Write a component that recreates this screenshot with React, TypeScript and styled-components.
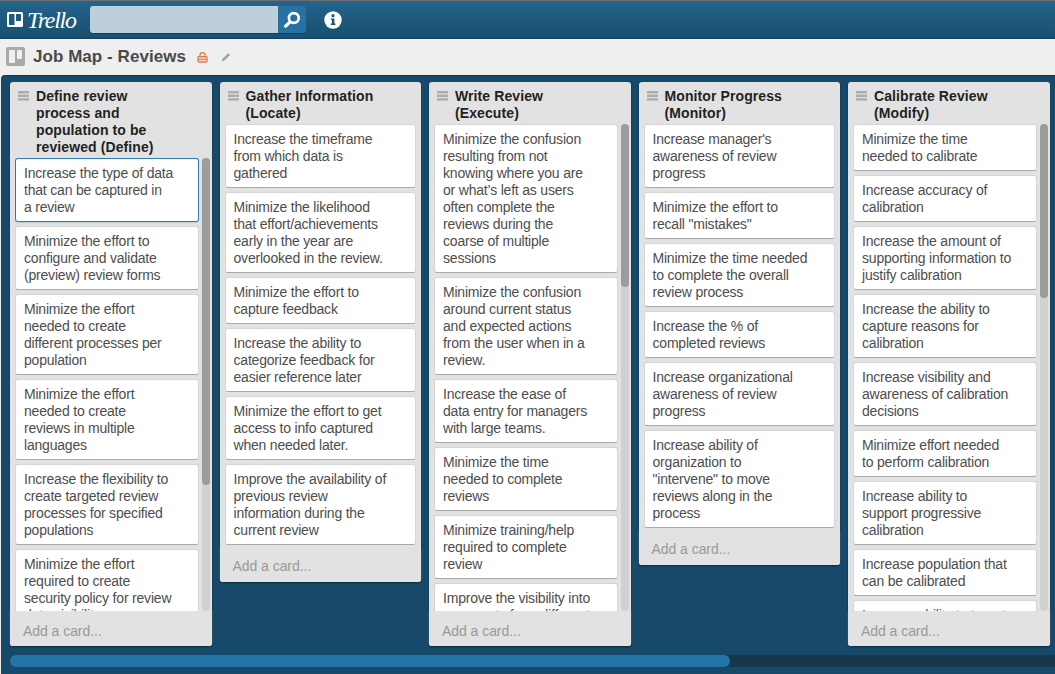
import React from "react";
import styled, { createGlobalStyle } from "styled-components";

const Global = createGlobalStyle`
  html, body { margin: 0; padding: 0; height: 100%; background: #efefef; overflow: hidden; }
  body { font-family: "Liberation Sans", Arial, sans-serif; }
  #root { height: 100%; }
`;

const Page = styled.div`
  width: 1055px;
  height: 674px;
  display: flex;
  flex-direction: column;
  overflow: hidden;
  background: #efefef;
`;

const Header = styled.header`
  height: 39px;
  flex: none;
  box-sizing: border-box;
  border-top: 1px solid #6a6f73;
  background: linear-gradient(#24648c, #18506f);
  border-bottom: 1px solid #15405c;
  display: flex;
  align-items: center;
  padding-left: 7px;
`;

const Logo = styled.div`
  display: flex;
  align-items: center;
  gap: 4px;
  width: 83px;
`;

const LogoWord = styled.span`
  font-family: "Liberation Serif", serif;
  font-style: italic;
  font-size: 24px;
  line-height: 30px;
  color: #fff;
  letter-spacing: -1.3px;
`;

const SearchBox = styled.div`
  display: flex;
  width: 216px;
  height: 27px;
  border-radius: 3px;
  overflow: hidden;
  box-shadow: 0 1px 0 #123d58;
`;

const SearchField = styled.div`
  flex: 1;
  background: #bccfdb;
`;

const SearchButton = styled.div`
  width: 28px;
  background: #2772a3;
  display: flex;
  align-items: center;
  justify-content: center;
`;

const InfoWrap = styled.div`
  margin-left: 18px;
  display: flex;
`;

const SubHeader = styled.div`
  height: 36px;
  flex: none;
  display: flex;
  align-items: center;
  padding-left: 6px;
  background: #efefef;
`;

const BoardIcon = styled.div`
  width: 19px;
  height: 19px;
  margin-top: -1px;
  box-sizing: border-box;
  background: #a9a9a9;
  border-radius: 2px;
  padding: 3px;
  display: flex;
  gap: 2px;
  align-items: flex-start;
`;

const BoardIconColumn = styled.span<{ $h: number }>`
  width: 5.5px;
  height: ${(p) => p.$h}px;
  background: #efefef;
  border-radius: 1px;
`;

const BoardTitle = styled.h1`
  margin: 0 11px 0 8px;
  font-size: 17px;
  line-height: 22px;
  font-weight: 700;
  letter-spacing: 0.05px;
  color: #4a4a4a;
`;

const LockWrap = styled.span`
  display: flex;
  margin-right: 13px;
`;

const Board = styled.main`
  flex: 1;
  margin-left: 1px;
  min-height: 0;
  background: #174a6a;
  border-top: 1px solid #12384f;
  border-radius: 4px 0 0 0;
  padding-top: 6px;
  display: flex;
  flex-direction: column;
`;

const Lists = styled.div`
  height: 564px;
  flex: none;
  padding-left: 9px;
  display: flex;
  align-items: flex-start;
  gap: 8px;
`;

const List = styled.section<{ $tall: boolean }>`
  width: 201.5px;
  flex: none;
  height: ${(p) => (p.$tall ? "564px" : "auto")};
  background: #e2e2e2;
  border-radius: 3px;
  box-shadow: 0 1px 2px rgba(0, 0, 0, 0.45);
  display: flex;
  flex-direction: column;
`;

const ListHeader = styled.div`
  display: flex;
  padding: 6px 6px 2px 8px;
  gap: 7px;
`;

const ListHandle = styled.svg`
  flex: none;
  margin-top: 3px;
`;

const ListTitle = styled.h2`
  margin: 0;
  font-size: 14px;
  line-height: 17px;
  font-weight: 700;
  letter-spacing: 0.1px;
  color: #222;
  white-space: pre-line;
`;

const Body = styled.div`
  flex: 1;
  min-height: 0;
  display: flex;
  padding: 0 5px;
`;

const Cards = styled.div<{ $scrolls: boolean }>`
  flex: ${(p) => (p.$scrolls ? "none" : "1")};
  width: ${(p) => (p.$scrolls ? "183.5px" : "auto")};
  overflow: hidden;
`;

const Card = styled.article<{ $active: boolean }>`
  box-sizing: border-box;
  background: #fff;
  border-radius: 3px;
  border: 1px solid ${(p) => (p.$active ? "#2f7cab" : "#d6d6d6")};
  border-bottom-color: ${(p) => (p.$active ? "#2f7cab" : "#a9a9a9")};
  box-shadow: ${(p) => (p.$active ? "0 0 2px #4d94c0" : "none")};
  padding: 6px 8px 5px;
  margin-bottom: 4px;
  font-size: 14px;
  line-height: 17px;
  letter-spacing: -0.2px;
  color: #4d4d4d;
  white-space: pre-line;
`;

const Track = styled.div`
  width: 8px;
  margin-left: 3px;
  flex: none;
  background: #d0d0d0;
  border-radius: 4px;
  height: calc(100% - 1px);
`;

const Thumb = styled.div`
  background: #9c9c9c;
  border-radius: 4px;
`;

const AddCard = styled.div<{ $tall: boolean }>`
  position: relative;
  height: ${(p) => (p.$tall ? "34px" : "33px")};
  box-sizing: border-box;
  padding: ${(p) => (p.$tall ? "11px" : "9px")} 13px 0;
  font-size: 14px;
  line-height: 17px;
  letter-spacing: -0.05px;
  color: #999;
  background: #e2e2e2;
  border-radius: 0 0 3px 3px;
  box-shadow: 0 -1px 1px #e2e2e2;
`;

const HScroll = styled.div`
  margin: 9px 0 0 9px;
  height: 12px;
  flex: none;
  background: #15384f;
  border-radius: 6px 0 0 6px;
`;

const HThumb = styled.div`
  width: 720px;
  height: 100%;
  background: #2574a6;
  border-radius: 6px;
`;

type ListData = { title: string; cards: string[]; thumb?: number };

const lists: ListData[] = [
  {
    title: "Define review\nprocess and\npopulation to be\nreviewed (Define)",
    thumb: 327,
    cards: [
      "Increase the type of data\nthat can be captured in\na review",
      "Minimize the effort to\nconfigure and validate\n(preview) review forms",
      "Minimize the effort\nneeded to create\ndifferent processes per\npopulation",
      "Minimize the effort\nneeded to create\nreviews in multiple\nlanguages",
      "Increase the flexibility to\ncreate targeted review\nprocesses for specified\npopulations",
      "Minimize the effort\nrequired to create\nsecurity policy for review\ndata visibility",
    ],
  },
  {
    title: "Gather Information\n(Locate)",
    cards: [
      "Increase the timeframe\nfrom which data is\ngathered",
      "Minimize the likelihood\nthat effort/achievements\nearly in the year are\noverlooked in the review.",
      "Minimize the effort to\ncapture feedback",
      "Increase the ability to\ncategorize feedback for\neasier reference later",
      "Minimize the effort to get\naccess to info captured\nwhen needed later.",
      "Improve the availability of\nprevious review\ninformation during the\ncurrent review",
    ],
  },
  {
    title: "Write Review\n(Execute)",
    thumb: 163,
    cards: [
      "Minimize the confusion\nresulting from not\nknowing where you are\nor what\u2019s left as users\noften complete the\nreviews during the\ncoarse of multiple\nsessions",
      "Minimize the confusion\naround current status\nand expected actions\nfrom the user when in a\nreview.",
      "Increase the ease of\ndata entry for managers\nwith large teams.",
      "Minimize the time\nneeded to complete\nreviews",
      "Minimize training/help\nrequired to complete\nreview",
      "Improve the visibility into\ncomments from different\nreviewers",
    ],
  },
  {
    title: "Monitor Progress\n(Monitor)",
    cards: [
      "Increase manager's\nawareness of review\nprogress",
      'Minimize the effort to\nrecall "mistakes"',
      "Minimize the time needed\nto complete the overall\nreview process",
      "Increase the % of\ncompleted reviews",
      "Increase organizational\nawareness of review\nprogress",
      'Increase ability of\norganization to\n"intervene" to move\nreviews along in the\nprocess',
    ],
  },
  {
    title: "Calibrate Review\n(Modify)",
    thumb: 174,
    cards: [
      "Minimize the time\nneeded to calibrate",
      "Increase accuracy of\ncalibration",
      "Increase the amount of\nsupporting information to\njustify calibration",
      "Increase the ability to\ncapture reasons for\ncalibration",
      "Increase visibility and\nawareness of calibration\ndecisions",
      "Minimize effort needed\nto perform calibration",
      "Increase ability to\nsupport progressive\ncalibration",
      "Increase population that\ncan be calibrated",
      "Increase ability to target\ncalibration",
    ],
  },
];

const LogoMark = () => (
  <svg width="16" height="15" viewBox="0 0 16 15" aria-hidden="true">
    <rect width="16" height="15" rx="1.5" fill="#fff" />
    <rect x="2" y="2" width="5.5" height="11" rx="0.5" fill="#1e5a80" />
    <rect x="9" y="2" width="5" height="7" rx="0.5" fill="#1e5a80" />
  </svg>
);

const SearchIcon = () => (
  <svg width="18" height="18" viewBox="0 0 18 18" aria-hidden="true">
    <circle cx="10.8" cy="7" r="4.9" fill="none" stroke="#fff" strokeWidth="2.6" />
    <path d="M7 10.8 2.6 15.2" stroke="#fff" strokeWidth="3.2" strokeLinecap="round" />
  </svg>
);

const InfoIcon = () => (
  <svg width="18" height="18" viewBox="0 0 18 18" aria-hidden="true">
    <circle cx="9" cy="9" r="8.7" fill="#fff" />
    <circle cx="9" cy="4.7" r="1.6" fill="#1c577a" />
    <path d="M6.8 7.4H10.4V12.6H11.4V14H6.8V12.6H7.9V8.8H6.8Z" fill="#1c577a" />
  </svg>
);

const LockIcon = () => (
  <svg width="11" height="11" viewBox="0 0 12 12" aria-hidden="true">
    <path d="M3.3 5V3.4a2.7 2.7 0 0 1 5.4 0V5" fill="none" stroke="#d9784f" strokeWidth="1.3" />
    <rect x="1" y="5" width="10" height="6" rx="1" fill="#f3d3c3" stroke="#d9784f" strokeWidth="1.2" />
    <path d="M1.5 8h9" stroke="#d9784f" strokeWidth="1" />
  </svg>
);

const PencilIcon = () => (
  <svg width="10" height="10" viewBox="0 0 11 11" aria-hidden="true">
    <path d="M8 1.2 10 3.2 3.6 9.6 0.8 10.3 1.5 7.6Z" fill="#a3a3a3" />
  </svg>
);

const Handle = () => (
  <ListHandle width="11" height="10" viewBox="0 0 11 10" aria-hidden="true">
    <rect y="0" width="11" height="2.4" fill="#acacac" />
    <rect y="3.6" width="11" height="2.4" fill="#acacac" />
    <rect y="7.2" width="11" height="2.4" fill="#acacac" />
  </ListHandle>
);

export default function App() {
  return (
    <Page>
      <Global />
      <Header>
        <Logo>
          <LogoMark />
          <LogoWord>Trello</LogoWord>
        </Logo>
        <SearchBox>
          <SearchField />
          <SearchButton>
            <SearchIcon />
          </SearchButton>
        </SearchBox>
        <InfoWrap>
          <InfoIcon />
        </InfoWrap>
      </Header>
      <SubHeader>
        <BoardIcon>
          <BoardIconColumn $h={13} />
          <BoardIconColumn $h={9} />
        </BoardIcon>
        <BoardTitle>Job Map - Reviews</BoardTitle>
        <LockWrap>
          <LockIcon />
        </LockWrap>
        <PencilIcon />
      </SubHeader>
      <Board>
        <Lists>
          {lists.map((list) => {
            const tall = list.thumb !== undefined;
            return (
              <List key={list.title} $tall={tall}>
                <ListHeader>
                  <Handle />
                  <ListTitle>{list.title}</ListTitle>
                </ListHeader>
                <Body>
                  <Cards $scrolls={tall}>
                    {list.cards.map((card, i) => (
                      <Card key={card} $active={list.title.startsWith("Define") && i === 0}>
                        {card}
                      </Card>
                    ))}
                  </Cards>
                  {tall && (
                    <Track>
                      <Thumb style={{ height: list.thumb }} />
                    </Track>
                  )}
                </Body>
                <AddCard $tall={tall}>Add a card...</AddCard>
              </List>
            );
          })}
        </Lists>
        <HScroll>
          <HThumb />
        </HScroll>
      </Board>
    </Page>
  );
}
